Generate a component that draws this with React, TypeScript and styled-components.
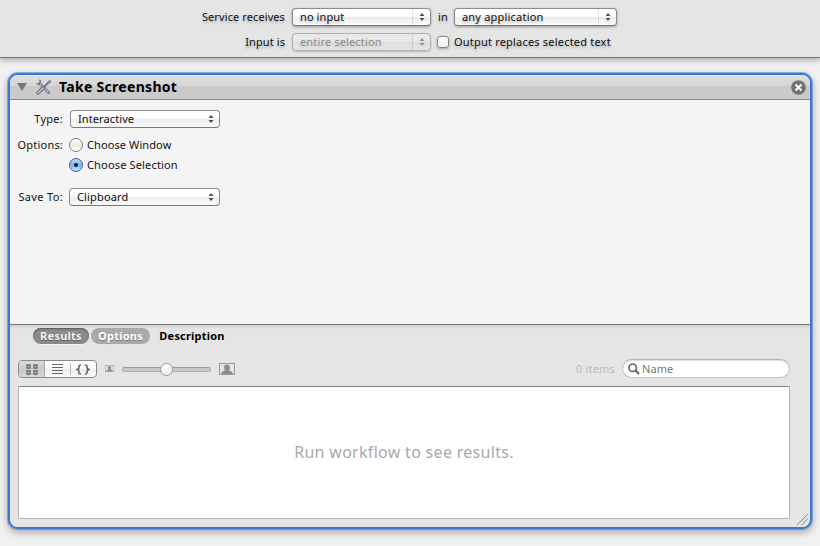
import React from 'react';
import styled, { createGlobalStyle, css } from 'styled-components';

const Global = createGlobalStyle`
  * { box-sizing: border-box; }
  html, body { margin: 0; height: 100%; overflow: hidden; }
  body {
    background: #f1f1f1;
    color: #111;
    font: 11px/16px "Lucida Grande", "Noto Sans", "Open Sans", sans-serif;
    letter-spacing: 0.1px;
  }
`;

const Page = styled.div`
  height: 546px;
  display: flex;
  flex-direction: column;
`;

const ServiceBar = styled.header`
  height: 58px;
  flex: none;
  padding: 8px 0 0 190px;
  display: flex;
  flex-direction: column;
  gap: 7px;
  background: #e5e5e5;
  border-bottom: 1px solid #777;
  box-shadow: 0 2px 6px rgba(0, 0, 0, 0.32);
  text-shadow: 0 2px 3px rgba(0, 0, 0, 0.28);
`;

const ServiceRow = styled.div`
  height: 18px;
  display: flex;
  align-items: center;
`;

const Text = styled.span<{ $w?: number; $ls?: number; $right?: boolean; $ml?: number }>`
  flex: none;
  white-space: nowrap;
  width: ${p => (p.$w ? `${p.$w}px` : 'auto')};
  margin-left: ${p => p.$ml ?? 0}px;
  text-align: ${p => (p.$right ? 'right' : 'left')};
  letter-spacing: ${p => p.$ls ?? 0.1}px;
`;

const PopupBox = styled.div<{ $w: number; $ml: number; $disabled?: boolean; $divided?: boolean }>`
  width: ${p => p.$w}px;
  height: 18px;
  flex: none;
  margin-left: ${p => p.$ml}px;
  padding-left: 7px;
  display: flex;
  align-items: center;
  justify-content: space-between;
  border: 1px solid #8c8c8c;
  border-bottom-color: #777;
  border-radius: 4px;
  background: linear-gradient(#fff 0 45%, #ececec 50%, #fafafa);
  ${p => p.$divided && css`box-shadow: 0 1px 3px rgba(0, 0, 0, 0.35);`}
  ${p => p.$disabled && css`
    color: #8c8c8c;
    text-shadow: 0 2px 3px rgba(0, 0, 0, 0.12);
    border-color: #b0b0b0;
    background: linear-gradient(#e9e9e9 0 45%, #dedede 50%, #e6e6e6);
    box-shadow: 0 1px 2px rgba(0, 0, 0, 0.2);
  `}
`;

const ArrowCell = styled.span<{ $divided?: boolean }>`
  width: 18px;
  height: 16px;
  display: flex;
  align-items: center;
  justify-content: center;
  border-left: 1px solid ${p => (p.$divided ? 'rgba(0,0,0,0.1)' : 'transparent')};
`;

type PopupProps = { label: string; w: number; ml: number; ls?: number; disabled?: boolean; divided?: boolean };

const Popup = ({ label, w, ml, ls, disabled, divided }: PopupProps) => (
  <PopupBox $w={w} $ml={ml} $disabled={disabled} $divided={divided}>
    <Text $ls={ls}>{label}</Text>
    <ArrowCell $divided={divided}>
      <svg width="6" height="8" viewBox="0 0 6 8" fill={disabled ? '#909090' : '#505050'}>
        <path d="M3 0 5.500 3H.5ZM3 8 .5 5h5Z" />
      </svg>
    </ArrowCell>
  </PopupBox>
);

const Checkbox = styled.span`
  width: 12px;
  height: 12px;
  margin-left: 6px;
  border: 1px solid #858585;
  border-radius: 3px;
  background: linear-gradient(#fff, #eee);
  box-shadow: 0 1px 3px rgba(0, 0, 0, 0.3);
`;

const ActionCard = styled.main`
  width: 804px;
  height: 456px;
  flex: none;
  margin: 15px 0 0 8px;
  display: flex;
  flex-direction: column;
  overflow: hidden;
  border: 2px solid #3b77d3;
  border-radius: 10px;
  background: #f4f4f4;
  box-shadow: 0 0 0 1px rgba(59, 119, 211, 0.5), 0 3px 7px 1px rgba(0, 0, 0, 0.28);
`;

const CardHeader = styled.div`
  height: 25px;
  flex: none;
  display: flex;
  align-items: center;
  padding: 0 4px 0 7px;
  border-bottom: 1px solid #858585;
  background: linear-gradient(#e0e0e0 0, #d5d5d5 46%, #cacaca 47%, #cbcbcb 100%);
`;

const ToolsIcon = styled.svg`
  flex: none;
  margin-left: 8px;
`;

const Title = styled.h1`
  margin: 0 auto 0 7px;
  font-size: 14px;
  line-height: 20px;
  font-weight: 700;
  letter-spacing: 0.3px;
  color: #000;
`;

const CardBody = styled.div`
  height: 224px;
  flex: none;
  padding-top: 10px;
`;

const Field = styled.div<{ $h: number }>`
  height: ${p => p.$h}px;
  display: flex;
  align-items: center;
`;

const Radio = styled.span<{ $on?: boolean }>`
  width: 14px;
  height: 14px;
  flex: none;
  margin: 0 4px 0 6px;
  display: flex;
  align-items: center;
  justify-content: center;
  border-radius: 50%;
  border: 1px solid ${p => (p.$on ? '#4a5a98' : '#808080')};
  background: ${p => (p.$on ? 'linear-gradient(#c5dcf5, #76b2ec 50%, #b9ecff)' : 'linear-gradient(#fff, #e9e9e9 55%, #fff)')};
  &::after {
    content: '';
    width: 4px;
    height: 4px;
    border-radius: 50%;
    background: ${p => (p.$on ? '#071b38' : 'transparent')};
  }
`;

const Footer = styled.section`
  flex: 1;
  display: flex;
  flex-direction: column;
  border-top: 1px solid #777;
  background: linear-gradient(#cfcfcf, #e5e5e5 4px);
`;

const Tabs = styled.nav`
  height: 16px;
  margin: 3px 0 0 23px;
  display: flex;
  gap: 2px;
`;

const Tab = styled.span<{ $kind: 'pressed' | 'hover' | 'plain'; $w: number; $ls: number }>`
  width: ${p => p.$w}px;
  height: 16px;
  border-radius: 8px;
  text-align: center;
  font-weight: 700;
  white-space: nowrap;
  letter-spacing: ${p => p.$ls}px;
  color: ${p => (p.$kind === 'plain' ? '#000' : '#fff')};
  ${p => p.$kind === 'pressed' && css`
    color: #f4f4f4;
    background: #8c8c8c;
    box-shadow: inset 0 1px 2px #555, 0 1px 0 #f2f2f2;
    text-shadow: 0 1px 1px #555;
  `}
  ${p => p.$kind === 'hover' && css`
    background: #aaa;
    text-shadow: 0 1px 1px #777;
  `}
`;

const Toolbar = styled.div`
  height: 20px;
  margin: 15px 20px 0 8px;
  display: flex;
  align-items: center;
`;

const Segments = styled.div`
  width: 79px;
  height: 18px;
  flex: none;
  display: flex;
  overflow: hidden;
  border: 1px solid #8b8b8b;
  border-radius: 4px;
  background: linear-gradient(#fff 0 45%, #eee 50%, #fafafa);
`;

const Segment = styled.span<{ $w: number; $on?: boolean; $sep?: boolean }>`
  width: ${p => p.$w}px;
  height: 16px;
  display: flex;
  align-items: center;
  justify-content: center;
  background: ${p => (p.$on ? 'linear-gradient(#dadada, #c9c9c9 50%, #d6d6d6)' : 'none')};
  border-right: ${p => (p.$on ? '1px solid #aaa' : '0')};
  ${p => p.$sep && css`
    &::before { content: ''; width: 1px; height: 12px; background: #bbb; margin-right: 5px; }
    padding-right: 6px;
  `}
`;

const PersonIcon = styled.svg<{ $ml: number }>`
  flex: none;
  margin: -1px 0 0 ${p => p.$ml}px;
`;

const Track = styled.div`
  width: 89px;
  height: 5px;
  flex: none;
  margin: 1px 0 0 8px;
  display: flex;
  align-items: center;
  justify-content: center;
  border: 1px solid #b0b0b0;
  border-top-color: #999;
  border-radius: 3px;
  background: #c9c9c9;
`;

const Knob = styled.span`
  width: 13px;
  height: 13px;
  flex: none;
  border: 1px solid #979797;
  border-radius: 50%;
  background: linear-gradient(#fff, #f0f0f0);
`;

const Search = styled.div`
  width: 168px;
  height: 19px;
  flex: none;
  display: flex;
  align-items: center;
  gap: 2px;
  margin: -1px 0 0 7px;
  padding-left: 5px;
  border: 1px solid #c4c4c4;
  border-top-color: #b2b2b2;
  border-radius: 10px;
  background: #fff;
  box-shadow: inset 0 1px 1px #ddd;
  color: #777;
`;

const Count = styled(Text)`
  margin-left: auto;
  color: #bbb;
`;

const Results = styled.div`
  width: 772px;
  height: 133px;
  margin: 7px 0 0 8px;
  padding-bottom: 2px;
  flex: none;
  display: flex;
  align-items: center;
  justify-content: center;
  border: 1px solid #b5b5b5;
  border-top-color: #858585;
  background: #fff;
  color: #a9a9a9;
  font-size: 16px;
  letter-spacing: 0.3px;
`;

const Grip = styled.svg`
  align-self: flex-end;
  margin: -5px 2px 0 0;
  flex: none;
`;

const Portrait = ({ w, h, ml }: { w: number; h: number; ml: number }) => (
  <PersonIcon $ml={ml} width={w} height={h} viewBox="0 0 16 12" preserveAspectRatio="none">
    <rect x="0.5" y="0.5" width="15" height="11" fill="#e5e5e5" stroke="#9a9a9a" />
    <path d="M8 1.500c2 0 3.200 1.300 3 3.300-.1 1.200-.7 1.900-1.100 2.300.2 1.200 3.700 1 4 3.900H2.100c.3-2.900 3.800-2.700 4-3.900C5.700 6.700 5.100 6 5 4.800 4.800 2.800 6 1.500 8 1.500Z" fill="#8c8c8c" />
  </PersonIcon>
);

export default function App() {
  return (
    <Page>
      <Global />
      <ServiceBar>
        <ServiceRow>
          <Text $w={95} $right>Service receives</Text>
          <Popup label="no input" w={139} ml={7} divided />
          <Text $ml={7} $w={9}>in</Text>
          <Popup label="any application" w={163} ml={7} ls={0.2} divided />
        </ServiceRow>
        <ServiceRow>
          <Text $w={95} $right>Input is</Text>
          <Popup label="entire selection" w={139} ml={7} ls={0.15} disabled divided />
          <Checkbox />
          <Text $ml={5} $ls={0.2}>Output replaces selected text</Text>
        </ServiceRow>
      </ServiceBar>

      <ActionCard>
        <CardHeader>
          <svg width="10" height="8" viewBox="0 0 10 8"><path d="M0 0h10L5 8Z" fill="#777" /></svg>
          <ToolsIcon width="17" height="17" viewBox="0 0 17 17" fill="none">
            <path d="m4.500 4.500 9 9" stroke="#6d6d80" strokeWidth="3" strokeLinecap="round" />
            <path d="m4.500 4.500 9 9" stroke="#bdbdcf" strokeWidth="1.300" />
            <path d="M1.500 4.500C3 6 6 5 5.500 2L4 1" stroke="#80808f" strokeWidth="1.600" />
            <path d="m14.500 2.500-6 6" stroke="#77778a" strokeWidth="2" strokeLinecap="round" />
            <path d="m13 2.500 2-1 1 1-1 2" fill="#9999a8" stroke="#777788" strokeWidth="0.700" />
            <path d="m8 9-5 5" stroke="#66667a" strokeWidth="3.500" strokeLinecap="round" />
            <path d="m8 9-5 5" stroke="#d0d0df" strokeWidth="1.400" strokeLinecap="round" />
          </ToolsIcon>
          <Title>Take Screenshot</Title>
          <svg width="15" height="15" viewBox="0 0 15 15">
            <circle cx="7.500" cy="7.500" r="7.300" fill="#727272" />
            <path d="m4.500 4.500 6 6m0-6-6 6" stroke="#fff" strokeWidth="2" />
          </svg>
        </CardHeader>

        <CardBody>
          <Field $h={18}>
            <Text $w={53} $ls={0.25} $right>Type:</Text>
            <Popup label="Interactive" w={150} ml={7} />
          </Field>
          <Field $h={34}>
            <Text $w={53} $ls={0.2} $right>Options:</Text>
            <Radio />
            <Text>Choose Window</Text>
          </Field>
          <Field $h={6}>
            <Text $w={53} />
            <Radio $on />
            <Text $ls={0.16}>Choose Selection</Text>
          </Field>
          <Field $h={58}>
            <Text $w={53} $ls={0.35} $right>Save To:</Text>
            <Popup label="Clipboard" w={151} ml={6} ls={0.15} />
          </Field>
        </CardBody>

        <Footer>
          <Tabs>
            <Tab $kind="pressed" $w={56} $ls={0.25}>Results</Tab>
            <Tab $kind="hover" $w={59} $ls={0.25}>Options</Tab>
            <Tab $kind="plain" $w={80} $ls={0.2}>Description</Tab>
          </Tabs>
          <Toolbar>
            <Segments>
              <Segment $w={26} $on>
                <svg width="12" height="11" viewBox="0 0 12 11" fill="none" stroke="#666">
                  <path d="M1 1h3v3H1ZM8 1h3v3H8ZM1 7h3v3H1ZM8 7h3v3H8Z" strokeWidth="1.300" />
                </svg>
              </Segment>
              <Segment $w={25}>
                <svg width="11" height="10" viewBox="0 0 11 10" stroke="#666"><path d="M0 .5h11M0 3.500h11M0 6.500h11M0 9.500h11" /></svg>
              </Segment>
              <Segment $w={26} $sep>
                <svg width="14" height="11" viewBox="0 0 14 11" fill="none" stroke="#666" strokeWidth="1.600">
                  <path d="M5 1C2 .8 3.300 4 2.600 4.800L1 5.500l1.600.7C3.300 7 2 10.200 5 10M9 1c3-.2 1.700 3 2.400 3.800l1.600.7-1.600.7C10.700 7 12 10.200 9 10" />
                </svg>
              </Segment>
            </Segments>
            <Portrait w={9} h={7} ml={8} />
            <Track><Knob /></Track>
            <Portrait w={16} h={12} ml={8} />
            <Count $ls={0.2}>0 items</Count>
            <Search>
              <svg width="12" height="12" viewBox="0 0 12 12" fill="none" stroke="#666">
                <circle cx="4.700" cy="4.700" r="3.700" strokeWidth="1.700" />
                <path d="m7.500 7.500 3.500 3.500" strokeWidth="2.200" />
              </svg>
              <Text>Name</Text>
            </Search>
          </Toolbar>
          <Results>Run workflow to see results.</Results>
          <Grip width="11" height="11" viewBox="0 0 11 11" stroke="#888" strokeWidth="1">
            <path d="M0 11 11 0M4.500 11 11 4.500" />
          </Grip>
        </Footer>
      </ActionCard>
    </Page>
  );
}
